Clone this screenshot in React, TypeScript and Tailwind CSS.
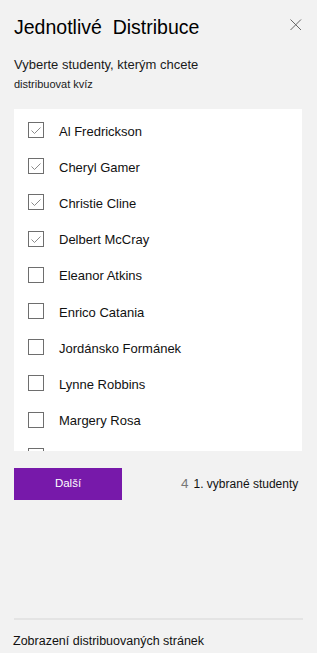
import React from "react";

const students = [
  { name: "Al Fredrickson", checked: true },
  { name: "Cheryl Gamer", checked: true },
  { name: "Christie Cline", checked: true },
  { name: "Delbert McCray", checked: true },
  { name: "Eleanor Atkins", checked: false },
  { name: "Enrico Catania", checked: false },
  { name: "Jordánsko Formánek", checked: false },
  { name: "Lynne Robbins", checked: false },
  { name: "Margery Rosa", checked: false },
  { name: "Miriam Graham", checked: false },
];

function Checkbox({ checked }: { checked: boolean }) {
  return (
    <div className="w-4 h-4 border border-[#6e6e6e] bg-white shrink-0 relative">
      {checked && (
        <svg width="14" height="14" viewBox="0 0 14 14" className="absolute left-0 top-0">
          <polyline points="2.5,7.5 5.5,10.5 11.5,4.5" fill="none" stroke="#8a8a8a" strokeWidth="1" />
        </svg>
      )}
    </div>
  );
}

export default function App() {
  return (
    <div
      className="w-[317px] h-[653px] bg-[#f2f2f2] flex flex-col overflow-hidden relative"
      style={{ fontFamily: '"Liberation Sans", Arial, sans-serif' }}
    >
      <div className="flex items-start justify-between pl-[14px] pr-[15px] pt-[16px]">
        <div className="text-[19.5px] leading-[23px] text-black">Jednotlivé&nbsp; Distribuce</div>
        <svg width="12" height="12" viewBox="0 0 12 12" className="mt-[3px]">
          <path d="M0.5 0.5 L11 11 M11 0.5 L0.5 11" stroke="#666" strokeWidth="1" fill="none" />
        </svg>
      </div>
      <div className="pl-[14px] mt-[18px] text-[13px] leading-[16px] text-[#1a1a1a]">
        Vyberte studenty, kterým chcete
      </div>
      <div className="pl-[14px] mt-[4px] text-[11px] leading-[14px] text-[#1a1a1a]">distribuovat kvíz</div>
      <div className="mx-[14px] mt-[18px] w-[288px] h-[342px] bg-white overflow-hidden pt-[3px]">
        {students.map((s) => (
          <div key={s.name} className="h-[36.2px] flex items-center pl-[14px]">
            <Checkbox checked={s.checked} />
            <span className="ml-[15px] text-[13px] leading-[16px] text-[#111] pt-[3px]">{s.name}</span>
          </div>
        ))}
      </div>
      <div className="flex items-center mt-[17px] pl-[14px]">
        <button className="w-[108px] h-[32px] bg-[#7719aa] text-white text-[11.5px] flex items-center justify-center">
          Další
        </button>
        <div className="ml-[59px] flex items-baseline">
          <span className="text-[13.5px] text-[#777]">4</span>
          <span className="ml-[5px] text-[12px] text-[#111]">1. vybrané studenty</span>
        </div>
      </div>
      <div className="mt-[118px] mx-[14px] h-[2px] bg-[#e4e4e4]" />
      <div className="pl-[13px] mt-[13px] text-[12.5px] leading-[16px] text-[#111]">
        Zobrazení distribuovaných stránek
      </div>
    </div>
  );
}
